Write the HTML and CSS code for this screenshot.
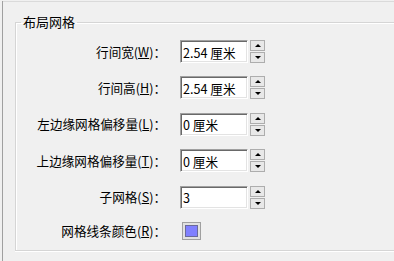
FILE: index.html
```html
<!DOCTYPE html>
<html lang="zh-CN">
<head>
  <meta charset="UTF-8">
  <title>布局网格</title>
  <link rel="stylesheet" href="styles.css">
</head>
<body>
  <div class="pane">
    <div class="pane-top">
      <fieldset class="group">
        <legend>布局网格</legend>
        <div class="form">
          <label>行间宽(<u>W</u>)：</label>
          <div class="field">
            <input class="text" type="text" value="2.54 厘米">
            <div class="spin"><button class="up"></button><button class="down"></button></div>
          </div>

          <label>行间高(<u>H</u>)：</label>
          <div class="field">
            <input class="text" type="text" value="2.54 厘米">
            <div class="spin"><button class="up"></button><button class="down"></button></div>
          </div>

          <label>左边缘网格偏移量(<u>L</u>)：</label>
          <div class="field">
            <input class="text" type="text" value="0 厘米">
            <div class="spin"><button class="up"></button><button class="down"></button></div>
          </div>

          <label>上边缘网格偏移量(<u>T</u>)：</label>
          <div class="field">
            <input class="text" type="text" value="0 厘米">
            <div class="spin"><button class="up"></button><button class="down"></button></div>
          </div>

          <label>子网格(<u>S</u>)：</label>
          <div class="field">
            <input class="text" type="text" value="3">
            <div class="spin"><button class="up"></button><button class="down"></button></div>
          </div>

          <label>网格线条颜色(<u>R</u>)：</label>
          <div class="field">
            <button class="swatch"><span></span></button>
          </div>
        </div>
      </fieldset>
    </div>
  </div>
</body>
</html>
```

FILE: styles.css
```css
html, body {
  margin: 0;
  padding: 0;
  height: 100%;
  overflow: hidden;
}
body {
  background: #f0f0f0;
  font-family: "Noto Sans CJK SC", "Noto Sans", sans-serif;
  font-size: 12.6px;
  color: #000;
}
.pane {
  margin-left: 2px;
  height: 261px;
  border-left: 1px solid #a0a0a0;
}
.pane-top {
  margin-top: 1px;
  border-top: 1px solid #dadada;
}
.group {
  box-sizing: border-box;
  margin: 12px 0 0 12px;
  padding: 0;
  height: 237px;
  border: 1px solid #d5d5d5;
  border-right: none;
  box-shadow: inset 1px 1px 0 #fff, 0 1px 0 #fff;
}
.group legend {
  margin-left: 5px;
  padding: 0 2px;
  font-size: 13px;
  line-height: 16px;
}
.form {
  display: grid;
  grid-template-columns: 150px auto;
  column-gap: 14px;
  row-gap: 13.4px;
  align-items: center;
  margin-top: 10px;
}
.form label {
  text-align: right;
  white-space: nowrap;
  line-height: 16px;
}
.field {
  display: flex;
  align-items: center;
  gap: 2px;
}
.text {
  box-sizing: border-box;
  width: 68px;
  height: 23px;
  margin: 0;
  padding: 1px 2px 0;
  font: inherit;
  color: #000;
  background: #fff;
  border: 1px solid;
  border-color: #a0a0a0 #fff #fff #a0a0a0;
  box-shadow: inset 1px 1px 0 #696969, inset -1px -1px 0 #e3e3e3;
  outline: none;
}
.spin {
  display: flex;
  flex-direction: column;
  gap: 1px;
}
.spin button {
  box-sizing: border-box;
  width: 15px;
  height: 11px;
  margin: 0;
  padding: 0;
  border: 1px solid #adadad;
  background: #e8e8e8;
  display: flex;
  align-items: center;
  justify-content: center;
}
.spin .up::before {
  content: '';
  border-left: 3px solid transparent;
  border-right: 3px solid transparent;
  border-bottom: 3px solid #000;
}
.spin .down::before {
  content: '';
  border-left: 3px solid transparent;
  border-right: 3px solid transparent;
  border-top: 3px solid #000;
}
.swatch {
  box-sizing: border-box;
  width: 19px;
  height: 18px;
  margin: 0 0 0 2px;
  padding: 2px;
  border: 1px solid #a0a0a0;
  background: #e1e1e1;
  display: flex;
}
.swatch span {
  flex: 1;
  background: #8080ff;
  border: 1px solid #6a6a9a;
}
```
